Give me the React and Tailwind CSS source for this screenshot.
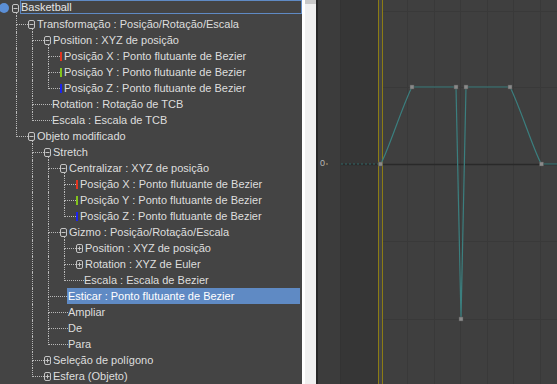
import React from 'react';

const tree = [
  {
    t: 'Basketball', children: [
      {
        t: 'Transformação : Posição/Rotação/Escala', children: [
          {
            t: 'Position : XYZ de posição', children: [
              { t: 'Posição X : Ponto flutuante de Bezier', bar: 'bg-[#e2341f]' },
              { t: 'Posição Y : Ponto flutuante de Bezier', bar: 'bg-[#84c41c]' },
              { t: 'Posição Z : Ponto flutuante de Bezier', bar: 'bg-[#1c22f0]' },
            ],
          },
          { t: 'Rotation : Rotação de TCB' },
          { t: 'Escala : Escala de TCB' },
        ],
      },
      {
        t: 'Objeto modificado', children: [
          {
            t: 'Stretch', children: [
              {
                t: 'Centralizar : XYZ de posição', children: [
                  { t: 'Posição X : Ponto flutuante de Bezier', bar: 'bg-[#e2341f]' },
                  { t: 'Posição Y : Ponto flutuante de Bezier', bar: 'bg-[#84c41c]' },
                  { t: 'Posição Z : Ponto flutuante de Bezier', bar: 'bg-[#1c22f0]' },
                ],
              },
              {
                t: 'Gizmo : Posição/Rotação/Escala', children: [
                  { t: 'Position : XYZ de posição', closed: true },
                  { t: 'Rotation : XYZ de Euler', closed: true },
                  { t: 'Escala : Escala de Bezier' },
                ],
              },
              { t: 'Esticar : Ponto flutuante de Bezier', sel: true },
              { t: 'Ampliar' },
              { t: 'De' },
              { t: 'Para' },
            ],
          },
          { t: 'Seleção de polígono', closed: true },
          { t: 'Esfera (Objeto)', closed: true },
        ],
      },
    ],
  },
];

const flatten = (nodes, level, guides, out) => {
  nodes.forEach((n, i) => {
    const last = i === nodes.length - 1;
    out.push({ ...n, level, guides, last });
    if (n.children) flatten(n.children, level + 1, [...guides, !last], out);
  });
  return out;
};

const rows = flatten(tree, 0, [], []);

const dot = 'border-dotted border-[#b9b9b9]';

// little boxed +/- toggle, with the start of the child guide under it
const Toggle = ({ open }) => (
  <div className="flex w-[7px] shrink-0 flex-col">
    <svg width="7" height="9" className="mt-1 shrink-0">
      <rect x="0.5" y="0.5" width="6" height="8" rx="1.5" fill="none" stroke="#c4c4c4" />
      <line x1="1.5" y1="4.5" x2="5.5" y2="4.5" stroke="#c4c4c4" />
      {!open && <line x1="3.5" y1="2.5" x2="3.5" y2="6.5" stroke="#c4c4c4" />}
    </svg>
    {open && <div className={`ml-1 flex-1 border-l ${dot}`} />}
  </div>
);

const Row = ({ n }) => {
  const open = !!n.children;
  const toggle = open || n.closed;

  if (n.level === 0) {
    return (
      <div className="flex h-4">
        <div className="w-3 shrink-0">
          <div className="ml-[-1px] mt-[3px] h-[10px] w-[10px] rounded-full bg-[#5b8fd6]" />
        </div>
        <Toggle open />
        <div className="ml-px flex h-[14px] flex-1 items-center border border-[#5f8ac4] text-[#e6e6e6]">{n.t}</div>
      </div>
    );
  }

  const cells = [];
  for (let k = 1; k < n.level; k++) {
    cells.push(<div key={k} className={`w-4 shrink-0 ${n.guides[k] ? `border-l ${dot}` : ''}`} />);
  }

  const elbowW = toggle || n.bar ? 'w-3' : n.sel ? 'w-[19px]' : 'w-5';

  return (
    <div className="flex h-4">
      <div className="w-4 shrink-0" />
      {cells}
      <div className={`flex shrink-0 flex-col ${elbowW}`}>
        <div className={`h-[9px] border-b border-l ${dot}`} />
        <div className={`flex-1 ${n.last ? '' : `border-l ${dot}`}`} />
      </div>
      {toggle && <Toggle open={open} />}
      {toggle && <div className="w-[2px] shrink-0" />}
      {n.bar && <div className={`mr-[2px] mt-[4px] h-[9px] w-[2px] shrink-0 ${n.bar}`} />}
      {n.sel ? (
        <div className="mr-[2px] flex flex-1 items-center bg-[#5f8ac4] pl-px text-white">{n.t}</div>
      ) : (
        <div className="flex items-center whitespace-nowrap text-[#dedede]">{n.t}</div>
      )}
    </div>
  );
};

const vGrid = [66, 93, 119, 146, 172, 199];
const hGrid = [11, 87, 241, 319];
const keys = [
  [39.5, 164], [71, 87], [115, 87], [120, 319], [125, 87], [169, 87], [200.5, 164],
];

const Curve = () => (
  <svg width="216" height="384" className="block">
    <rect x="0" y="0" width="37" height="384" fill="#363636" />
    <rect x="42" y="0" width="174" height="384" fill="#3f3f3f" />
    {vGrid.map((x) => (
      <line key={x} x1={x + 0.5} y1="0" x2={x + 0.5} y2="384" stroke="#393939" />
    ))}
    {hGrid.map((y) => (
      <line key={y} x1="42" y1={y + 0.5} x2="216" y2={y + 0.5} stroke="#393939" />
    ))}
    <line x1="0" y1="164.5" x2="216" y2="164.5" stroke="#292929" strokeWidth="1.5" />
    <line x1="0" y1="164" x2="39" y2="164" stroke="#336b6b" strokeDasharray="2 2" />
    <line x1="37.5" y1="0" x2="37.5" y2="384" stroke="#8c7c14" />
    <line x1="41.5" y1="0" x2="41.5" y2="384" stroke="#8c7c14" />
    <path
      d="M39.5 164 C45 157 62 104 71 87 L115 87 L120 319 L125 87 L169 87 C178 104 195 157 200.5 164 L216 164"
      fill="none"
      stroke="#3b7f7f"
      strokeWidth="1.2"
    />
    {keys.map(([x, y], i) => (
      <rect key={i} x={x - 2} y={y - 2} width="4" height="4" fill="#8a8a8a" stroke="#555" strokeWidth="0.5" />
    ))}
  </svg>
);

export default function App() {
  return (
    <div className="flex h-[384px] w-[557px] overflow-hidden bg-[#444444] font-['Liberation_Sans',Arial,sans-serif] text-[11px] leading-none">
      <div className="w-[302px] shrink-0 overflow-hidden">
        {rows.map((n, i) => (
          <Row key={i} n={n} />
        ))}
      </div>
      <div className="w-[3px] shrink-0 bg-white" />
      <div className="flex w-[11px] shrink-0 flex-col bg-[#efefef]">
        <div className="h-1 bg-[#c9c9c9]" />
      </div>
      <div className="w-[2px] shrink-0 bg-[#262626]" />
      <div className="w-[22px] shrink-0 bg-[#3c3c3c] pl-[2px] pt-[159px]">
        <div className="flex items-center gap-px text-[9px] text-[#b8b8b8]">
          0<span className="h-[2px] w-[2px] bg-[#7a6a50]" />
        </div>
      </div>
      <div className="w-px shrink-0 bg-[#333333]" />
      <div className="flex-1">
        <Curve />
      </div>
    </div>
  );
}
